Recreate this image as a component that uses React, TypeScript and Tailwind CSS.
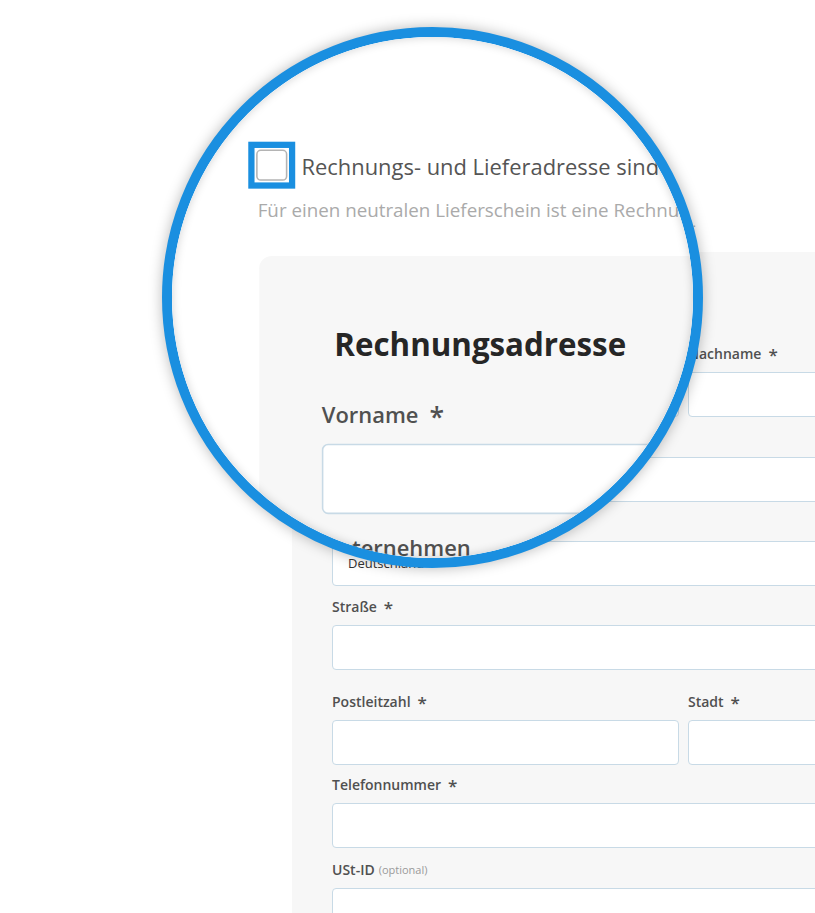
import React from "react";

type FieldProps = {
  label: string;
  required?: boolean;
  optional?: boolean;
  value?: string;
  className?: string;
};

function Field({ label, required, optional, value, className = "" }: FieldProps) {
  return (
    <div className={className}>
      <div className="mb-[9px] flex h-[18px] items-center whitespace-nowrap text-[14px] font-semibold leading-[18px] text-[#505050]">
        <span>{label}</span>
        {required && <span className="ml-[7px] text-[17px] font-semibold leading-none">*</span>}
        {optional && <span className="ml-[4px] text-[11px] font-normal text-[#9a9a9a]">(optional)</span>}
      </div>
      <div className="flex h-[45px] items-center rounded-[4px] border border-[#c8dae6] bg-white pl-[15px] text-[13px] text-[#333]">
        {value}
      </div>
    </div>
  );
}

function AddressPage() {
  return (
    <div className="pt-[179px] font-['Open_Sans',sans-serif]">
      {/* "same address" checkbox */}
      <div className="ml-[285px] flex items-center">
        <div className="flex h-[30px] w-[30px] items-center justify-center border-[4px] border-[#1a8fe0] bg-white">
          <div className="h-[20px] w-[20px] rounded-[3px] border border-[#b4b4b4] bg-white" />
        </div>
        <span className="ml-[4px] whitespace-nowrap text-[14px] text-[#555]">
          Rechnungs- und Lieferadresse sind identisch
        </span>
      </div>
      <p className="ml-[291px] mt-[6px] whitespace-nowrap text-[12px] leading-[16px] text-[#aaa]">
        Für einen neutralen Lieferschein ist eine Rechnungsadresse erforderlich.
      </p>

      {/* billing address card */}
      <section className="ml-[292px] mt-[21px] w-[800px] rounded-[8px] bg-[#f7f7f7] px-[40px] pb-[40px] pt-[44px]">
        <h2 className="ml-[8px] text-[20px] font-bold leading-[26px] text-[#262626]">Rechnungsadresse</h2>
        <div className="mt-[23px] grid grid-cols-[347px_1fr] gap-x-[9px]">
          <Field label="Vorname" required />
          <Field label="Nachname" required />
        </div>
        <Field className="mt-[13px]" label="Unternehmen" />
        <Field className="mt-[12px]" label="Land" required value="Deutschland" />
        <Field className="mt-[12px]" label="Straße" required />
        <div className="mt-[23px] grid grid-cols-[347px_1fr] gap-x-[9px]">
          <Field label="Postleitzahl" required />
          <Field label="Stadt" required />
        </div>
        <Field className="mt-[11px]" label="Telefonnummer" required />
        <Field className="mt-[13px]" label="USt-ID" optional />
      </section>
    </div>
  );
}

export default function App() {
  return (
    <div className="relative h-[913px] w-[815px] overflow-hidden bg-white">
      <AddressPage />

      {/* magnifying glass */}
      <div className="absolute left-[162px] top-[27px] h-[541px] w-[541px] overflow-hidden rounded-full border-[10px] border-[#1a8fe0] bg-white shadow-[0_0_14px_rgba(0,0,0,0.28)]">
        <div className="absolute left-[-172px] top-[-37px] h-[913px] w-[815px] origin-[350px_245px] scale-[1.565] bg-white">
          <AddressPage />
        </div>
        <div className="absolute inset-0 rounded-full shadow-[inset_0_0_10px_rgba(0,0,0,0.18)]" />
      </div>
    </div>
  );
}
